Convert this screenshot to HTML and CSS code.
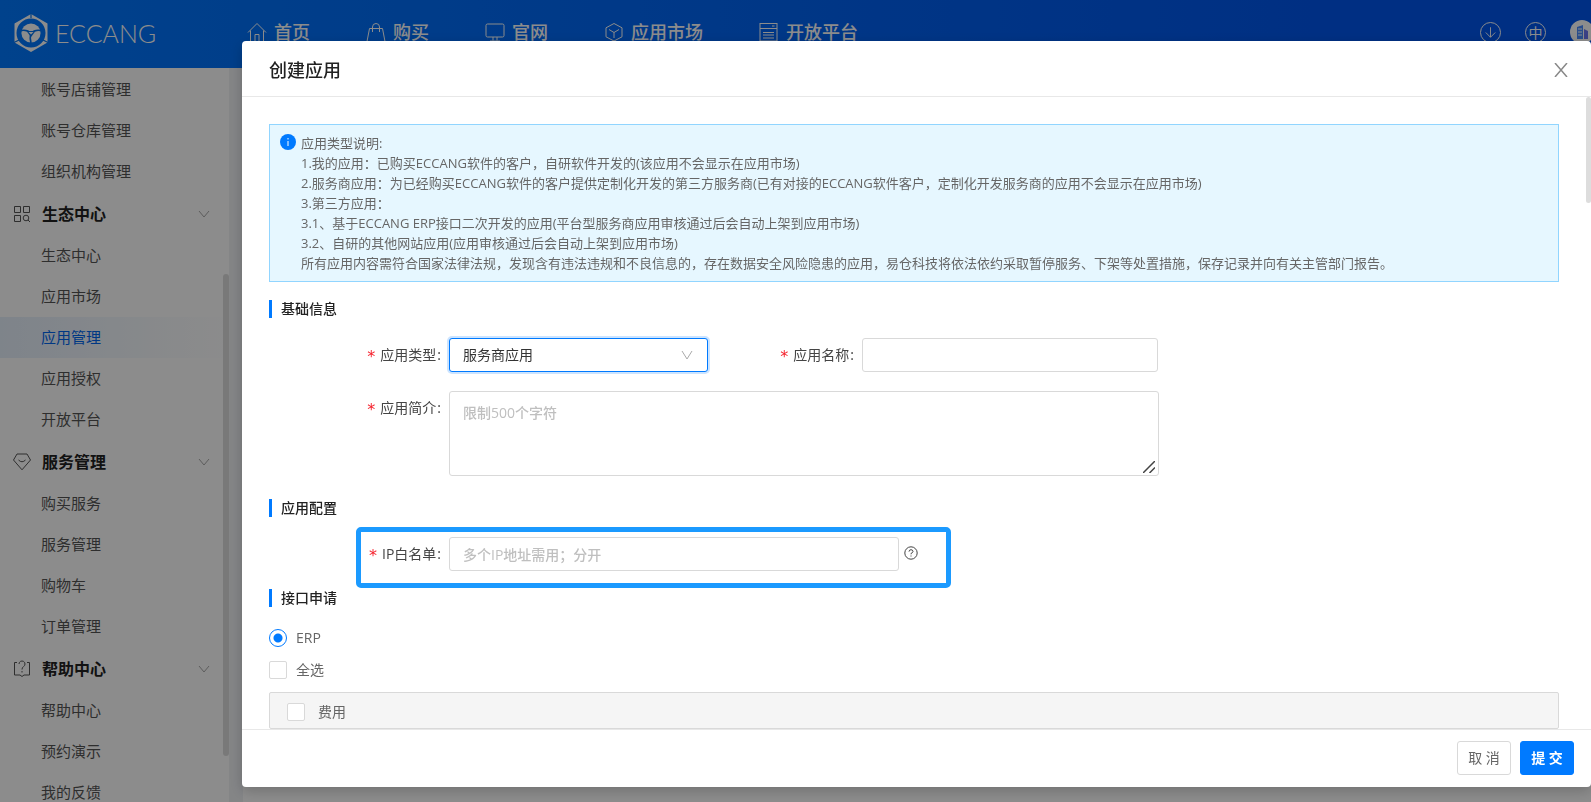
FILE: index.html
```html
<!DOCTYPE html>
<html lang="zh-CN">
<head>
<meta charset="utf-8">
<title>创建应用</title>
<link rel="stylesheet" href="styles.css">
</head>
<body>
<div class="page">
  <header class="topbar">
    <a class="logo" href="#">
      <svg class="logo-mark" viewBox="0 0 36 40" aria-hidden="true">
        <path d="M18 1 34.500 10.500v19L18 39 1.500 29.500v-19zM18 5.500a14.500 14.500 0 1 0 0 29 14.500 14.500 0 0 0 0-29z" fill="#fff" fill-rule="evenodd"/>
        <path d="M18 0v5M1 29.500l5-2.500M35 29.500 30 27" stroke="#0072ef" stroke-width="1.200"/>
        <circle cx="18" cy="20" r="9.600" fill="#fff"/>
        <path d="M8.500 17.500Q14.500 16.500 18 20.500q3.500-4 9.500-3M18 20.500q-1.500 4 0 9.500" fill="none" stroke="#0072ef" stroke-width="1.600"/>
        <path d="M13.500 18h9L18.500 23.500h-1z" fill="#0072ef"/>
        <path d="M15.500 19h5L18 21.500z" fill="#fff"/>
      </svg>
      <span class="logo-name">ECCANG</span>
    </a>
    <nav class="nav">
      <a href="#"><svg viewBox="0 0 20 20"><path d="M1 10.500 10 1.500l9 9M3.500 8.500v11h4.500v-7h4v7h4.500v-11"/></svg>首页</a>
      <a href="#"><svg viewBox="0 0 20 20"><path d="M3.500 6.500h13l2.500 13H1zM6.500 10V5a3.500 3.500 0 0 1 7 0v5"/></svg>购买</a>
      <a href="#"><svg viewBox="0 0 20 20"><rect x="1" y="2" width="18" height="13" rx="1.500"/><path d="M8 15v3.500M12 15v3.500M5 19h10"/></svg>官网</a>
      <a href="#"><svg viewBox="0 0 20 20"><path d="m10 1.500 8 4.300v9L10 19l-8-4.200v-9zM5 7.500l5 3 5-3M10 10.500V16"/></svg>应用市场</a>
      <a href="#"><svg viewBox="0 0 20 20"><rect x="1" y="1.500" width="17" height="17.500"/><path d="M1 6.500h17M4 10.500h11M4 13h11M4 16h11M13 4h2.500"/></svg>开放平台</a>
    </nav>
    <div class="tools">
      <button class="tool" aria-label="下载"><svg viewBox="0 0 20 20"><path d="M10 4.500v10.500M5 10l5 5 5-5"/></svg></button>
      <button class="tool" aria-label="语言">中</button>
      <button class="avatar" aria-label="账户"><svg viewBox="0 0 24 24"><path d="M7 7l6-2v14H7z" fill="#4b8dff"/><path d="M14 9l4 2v8h-4z" fill="#6a75f0"/><path d="M8 9h4M8 12h4M8 15h4" stroke="#fff"/></svg></button>
    </div>
  </header>
  <div class="main">
    <aside class="sidebar">
      <ul class="menu">
        <li><a href="#">账号店铺管理</a></li>
        <li><a href="#">账号仓库管理</a></li>
        <li><a href="#">组织机构管理</a></li>
      </ul>
      <button class="group">
        <svg class="group-icon" viewBox="0 0 18 18"><path d="M1.500 1.500h6v6h-6zM10.500 1.500h6v6h-6zM1.500 10.500h6v6h-6z"/><circle cx="13" cy="13" r="2.800"/><path d="m15 15 2 2"/></svg>
        <span>生态中心</span>
        <svg class="chevron" viewBox="0 0 12 12"><path d="m1 3 5 6 5-6"/></svg>
      </button>
      <ul class="menu">
        <li><a href="#">生态中心</a></li>
        <li><a href="#">应用市场</a></li>
        <li><a class="active" href="#">应用管理</a></li>
        <li><a href="#">应用授权</a></li>
        <li><a href="#">开放平台</a></li>
      </ul>
      <button class="group">
        <svg class="group-icon" viewBox="0 0 18 18"><path d="M4 1h10l3.500 6L9 16.800.5 7zM5.500 7Q9 10.500 12.500 7"/></svg>
        <span>服务管理</span>
        <svg class="chevron" viewBox="0 0 12 12"><path d="m1 3 5 6 5-6"/></svg>
      </button>
      <ul class="menu">
        <li><a href="#">购买服务</a></li>
        <li><a href="#">服务管理</a></li>
        <li><a href="#">购物车</a></li>
        <li><a href="#">订单管理</a></li>
      </ul>
      <button class="group">
        <svg class="group-icon" viewBox="0 0 18 18"><path d="M4 2.500H1.500v12.500H7l2 1.500 2-1.500h5.500V2.500H14M6 4a3 3 0 1 1 4.500 2.600Q9 7.500 9 9.500M9 11v1.500"/></svg>
        <span>帮助中心</span>
        <svg class="chevron" viewBox="0 0 12 12"><path d="m1 3 5 6 5-6"/></svg>
      </button>
      <ul class="menu">
        <li><a href="#">帮助中心</a></li>
        <li><a href="#">预约演示</a></li>
        <li><a href="#">我的反馈</a></li>
      </ul>
      <div class="side-thumb"></div>
    </aside>
    <div class="content"></div>
  </div>
</div>

<div class="mask"></div>

<section class="modal" role="dialog" aria-labelledby="dialog-title">
  <header class="modal-head">
    <h1 id="dialog-title">创建应用</h1>
    <button class="close" aria-label="关闭"><svg viewBox="0 0 14 14"><path d="m1 0 12 14M13 0 1 14"/></svg></button>
  </header>
  <div class="modal-body">
    <div class="alert">
      <svg class="info" viewBox="0 0 16 16"><circle cx="8" cy="8" r="8" fill="#007aff"/><path d="M8 4v1.500M8 7v5" stroke="#fff"/></svg>
      <div>
        <p>应用类型说明:</p>
        <p>1.我的应用：已购买ECCANG软件的客户，自研软件开发的(该应用不会显示在应用市场)</p>
        <p>2.服务商应用：为已经购买ECCANG软件的客户提供定制化开发的第三方服务商(已有对接的ECCANG软件客户，定制化开发服务商的应用不会显示在应用市场)</p>
        <p>3.第三方应用：</p>
        <p>3.1、基于ECCANG ERP接口二次开发的应用(平台型服务商应用审核通过后会自动上架到应用市场)</p>
        <p>3.2、自研的其他网站应用(应用审核通过后会自动上架到应用市场)</p>
        <p>所有应用内容需符合国家法律法规，发现含有违法违规和不良信息的，存在数据安全风险隐患的应用，易仓科技将依法依约采取暂停服务、下架等处置措施，保存记录并向有关主管部门报告。</p>
      </div>
    </div>

    <h2>基础信息</h2>
    <div class="row">
      <label for="type">应用类型<i>:</i></label>
      <div class="select-box">
        <select id="type"><option>服务商应用</option></select>
        <svg class="chevron" viewBox="0 0 12 12"><path d="m1 2 5 8 5-8"/></svg>
      </div>
      <label class="second" for="name">应用名称<i>:</i></label>
      <input class="name" id="name" type="text">
    </div>
    <div class="row">
      <label for="intro">应用简介<i>:</i></label>
      <div class="area-box">
        <textarea id="intro" placeholder="限制500个字符"></textarea>
        <svg class="grip" viewBox="0 0 12 12"><path d="M0 12 12 0M6.500 12 12 6.500"/></svg>
      </div>
    </div>

    <h2 class="config">应用配置</h2>
    <div class="row">
      <label for="ip">IP白名单<i>:</i></label>
      <input class="ip" id="ip" type="text" placeholder="多个IP地址需用；分开">
      <svg class="help" viewBox="0 0 14 14"><circle cx="7" cy="7" r="6.200"/><path d="M5 5.600Q5.200 3.700 7 3.700t2 1.700Q9 6.600 7 7.500v.8M7 9.500v1"/></svg>
      <div class="highlight"></div>
    </div>

    <h2>接口申请</h2>
    <label class="choice erp"><input type="radio" name="api" checked>ERP</label>
    <label class="choice all"><input type="checkbox">全选</label>
    <div class="panel"><label class="choice"><input type="checkbox">费用</label></div>
    <div class="body-thumb"></div>
  </div>
  <footer class="modal-foot">
    <button class="btn">取 消</button>
    <button class="btn primary">提 交</button>
  </footer>
</section>
</body>
</html>
```
FILE: styles.css
```css
* { box-sizing: border-box; }
body, h1, h2, p, ul { margin: 0; padding: 0; }
body {
  height: 100vh;
  overflow: hidden;
  font: 14px/20px "Open Sans", "Noto Sans CJK SC", sans-serif;
  color: #666;
}
button, input, select, textarea { font: inherit; color: inherit; margin: 0; }
button { padding: 0; border: 0; background: none; }
a { color: inherit; text-decoration: none; }
svg { flex: none; fill: none; stroke: currentColor; }

.page { height: 100%; display: flex; flex-direction: column; background: #f0f2f5; }
.topbar {
  flex: none;
  height: 68px;
  display: flex;
  align-items: center;
  overflow: hidden;
  color: #fff;
  background: linear-gradient(90deg, #0078ff, #0056ee 85%);
}
.logo { flex: none; width: 247px; display: flex; align-items: center; gap: 6px; padding: 0 0 3px 13px; }
.logo-mark { width: 36px; height: 40px; stroke: none; }
.logo-name { font: 300 25px/40px Lato, sans-serif; }
.nav { display: flex; gap: 56px; padding-bottom: 4px; white-space: nowrap; }
.nav a { display: flex; align-items: center; gap: 7px; font-size: 18px; line-height: 26px; font-weight: 500; }
.nav svg { width: 20px; height: 20px; }
.tools { margin-left: auto; display: flex; flex: none; align-items: center; gap: 24px; padding-bottom: 4px; margin-right: -3px; }
.tool { width: 21px; height: 21px; border: 1px solid #fff; border-radius: 50%; font-size: 14px; line-height: 19px; }
.tool svg { display: block; width: 19px; height: 19px; }
.avatar { width: 24px; height: 24px; border-radius: 50%; background: #fff; }
.avatar svg { display: block; stroke: none; }

.main { flex: 1; min-height: 0; display: flex; gap: 14px; }
.sidebar { position: relative; flex: none; width: 229px; padding-top: 1px; overflow: hidden; background: #fff; }
.content { flex: 1; background: #fff; }
.menu { list-style: none; }
.menu a { display: block; padding-left: 41px; font-size: 15px; line-height: 41px; color: #555; }
.menu .active { color: #0067f0; background: linear-gradient(90deg, #e6f0fc, #fff); }
.group { display: flex; align-items: center; width: 100%; height: 43px; padding: 0 19px 0 13px; font-size: 16px; font-weight: 700; color: #222; }
.group-icon { width: 18px; height: 18px; margin-right: 11px; color: #555; }
.chevron { width: 12px; height: 12px; margin-left: auto; color: #aaa; }
.side-thumb { position: absolute; right: 0; top: 206px; width: 6px; height: 482px; border-radius: 3px; background: #ddd; }

.mask { position: fixed; inset: 0; background: rgba(0, 0, 0, .45); }

.modal {
  position: fixed;
  inset: 41px 0 15px 242px;
  display: flex;
  flex-direction: column;
  overflow: hidden;
  border-radius: 4px;
  background: #fff;
  box-shadow: 0 4px 14px rgba(0, 0, 0, .2);
}
.modal-head { flex: none; display: flex; align-items: center; justify-content: space-between; height: 56px; padding: 2px 23px 0 27px; border-bottom: 1px solid #e8e8e8; }
h1 { font-size: 18px; line-height: 26px; font-weight: 500; color: #222; }
.close { width: 14px; height: 14px; color: #888; }
.close svg { display: block; stroke-width: 1.5; }
.modal-body { position: relative; flex: 1; min-height: 0; overflow: hidden; padding: 27px 32px 0 27px; }
.body-thumb { position: absolute; top: 0; right: 0; width: 5px; height: 106px; border-radius: 3px; background: #ddd; }

.alert { display: flex; gap: 5px; padding: 8px 10px; border: 1px solid #91d5ff; background: #e6f7ff; font-size: 13px; }
.info { width: 16px; height: 16px; margin-top: 1px; stroke: none; }

h2 { margin: 18px 0 20px; padding-left: 9px; border-left: 3px solid #007aff; font-size: 14px; line-height: 18px; font-weight: 500; color: #222; }
.config { margin-top: 23px; }
.row { position: relative; display: flex; }
.row + .row { margin-top: 19px; }
.row > label { flex: none; display: flex; justify-content: flex-end; width: 180px; height: 34px; padding-right: 8px; line-height: 34px; white-space: nowrap; color: #444; }
.row > .second { width: 154px; }
.row > label::before { content: "*"; margin-right: 5px; padding-top: 2px; font-family: "DejaVu Sans", sans-serif; font-size: 16px; color: #f5222d; }
.row i { font-style: normal; margin-left: 1px; }
.select-box { position: relative; flex: 0 1 259px; }
.area-box { position: relative; flex: 0 1 710px; }
select, .row input, textarea { display: block; width: 100%; height: 34px; padding: 0 13px; border: 1px solid #d9d9d9; border-radius: 3px; background: #fff; outline: 0; }
select { appearance: none; border-color: #007aff; box-shadow: 0 0 0 2px #cce4ff; color: #333; }
.select-box .chevron { position: absolute; right: 15px; top: 11px; }
.row .name { flex: 0 1 296px; width: 0; }
.row .ip { flex: 0 1 450px; width: 0; }
textarea { height: 85px; padding: 11px 13px; resize: none; }
::placeholder { color: #bfbfbf; opacity: 1; font-weight: 500; }
.grip { position: absolute; right: 4px; bottom: 3px; width: 12px; height: 12px; stroke: #444; stroke-width: 1.5; }
.help { width: 14px; height: 14px; margin: 9px 0 0 5px; color: #444; }
.highlight { position: absolute; left: 87px; top: -10px; width: 595px; height: 61px; border: 5px solid #1b9aff; border-radius: 5px; pointer-events: none; }

.choice { display: flex; align-items: center; gap: 9px; height: 18px; }
.choice input { appearance: none; flex: none; width: 18px; height: 18px; border: 1px solid #d9d9d9; border-radius: 2px; background: #fff; }
.choice input[type="radio"] { border-color: #007aff; border-radius: 50%; background: radial-gradient(circle, #007aff 4px, #fff 5px); }
.erp { margin-top: 22px; }
.all { margin: 14px 0 13px; }
.panel { padding: 10px 17px 7px; border: 1px solid #d9d9d9; border-radius: 2px; background: #f5f5f5; }
.panel .choice { gap: 13px; }

.modal-foot { flex: none; display: flex; justify-content: flex-end; gap: 9px; padding: 11px 17px 12px; border-top: 1px solid #e8e8e8; }
.btn { width: 54px; height: 34px; border: 1px solid #d9d9d9; border-radius: 3px; background: #fff; }
.primary { border-color: #007aff; background: #007aff; color: #fff; font-weight: 700; }
```
